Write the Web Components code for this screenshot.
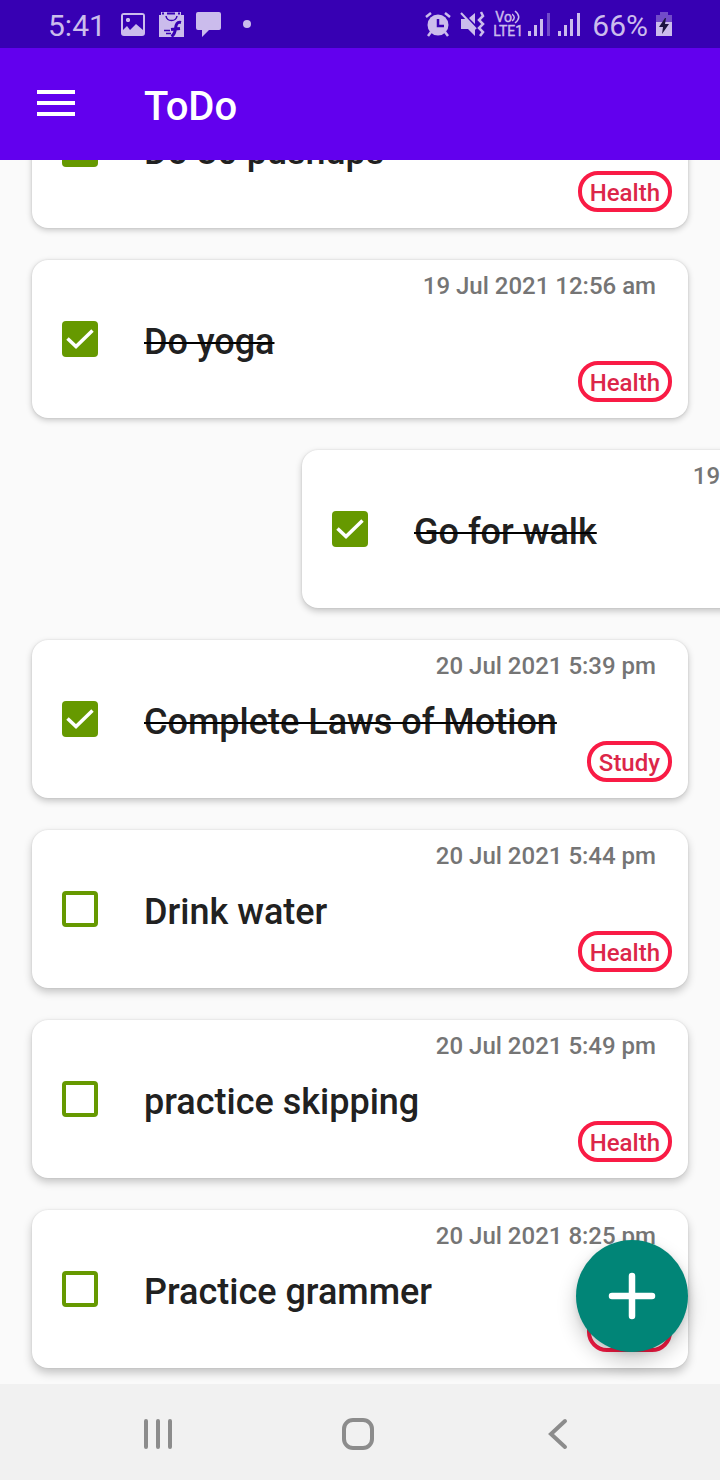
<!DOCTYPE html>
<html lang="en">
<head>
<meta charset="utf-8">
<meta name="viewport" content="width=device-width, initial-scale=1">
<title>ToDo</title>
<style>
  html, body { margin: 0; height: 100%; }
  body { font-family: Roboto, "Liberation Sans", sans-serif; background: #fafafa; color: #212121; }
</style>
</head>
<body>
<todo-app>
  <status-bar slot="top"></status-bar>
  <app-bar slot="top">ToDo</app-bar>
  <task-list>
    <task-card done tag="Health">Do 30 pushups</task-card>
    <task-card done date="19 Jul 2021 12:56 am" tag="Health">Do yoga</task-card>
    <task-card done swiped date="19 Jul 2021 12:56 am">Go for walk</task-card>
    <task-card done date="20 Jul 2021 5:39 pm" tag="Study">Complete Laws of Motion</task-card>
    <task-card date="20 Jul 2021 5:44 pm" tag="Health">Drink water</task-card>
    <task-card date="20 Jul 2021 5:49 pm" tag="Health">practice skipping</task-card>
    <task-card date="20 Jul 2021 8:25 pm" tag="Study">Practice grammer</task-card>
  </task-list>
  <add-button slot="floating"></add-button>
  <nav-bar slot="bottom"></nav-bar>
</todo-app>

<script>
class BaseElement extends HTMLElement {
  render(html) {
    const root = this.attachShadow({ mode: "open" });
    root.innerHTML = html;
    return root;
  }
}

customElements.define("todo-app", class extends BaseElement {
  connectedCallback() {
    this.render(`
      <style>
        :host { display: flex; flex-direction: column; height: 100vh; overflow: hidden; }
        main { position: relative; flex: 1; min-height: 0; display: flex; flex-direction: column; }
      </style>
      <slot name="top"></slot>
      <main><slot></slot><slot name="floating"></slot></main>
      <slot name="bottom"></slot>`);
  }
});

customElements.define("status-bar", class extends BaseElement {
  connectedCallback() {
    this.render(`
      <style>
        :host { display: flex; justify-content: space-between; align-items: center; height: 48px;
          padding: 0 48px; background: #3700b3; color: #cbbcec; font-size: 30px; line-height: 36px; }
        div { display: flex; align-items: center; }
        .left { gap: 12px; }
        .right { gap: 8px; }
        .time { margin: 4px 2px 0 0; }
        .percent { margin: 4px 0 0 4px; }
        svg { display: block; fill: currentColor; }
        .volte { display: grid; font-size: 14px; line-height: 14px; width: 30px; margin-right: -3px; -webkit-text-stroke: .4px; }
        .volte span:first-child { display: flex; padding-left: 2px; }
      </style>
      <div class="left">
        <span class="time">5:41</span>
        <svg width="26" height="26" viewBox="0 0 26 26"><path fill-rule="evenodd" d="M4 2h18a3 3 0 0 1 3 3v17a3 3 0 0 1-3 3H4a3 3 0 0 1-3-3V5a3 3 0 0 1 3-3zM3 4v15l4-4 3 4 6-6 7 6V4zm4 3h2l1 1v2l-1 1H7l-1-1V8z"/></svg>
        <svg width="26" height="26" viewBox="0 0 26 26"><path d="M3 1h20v3h3v22H1V4h2z"/><g fill="none" stroke="#3700b3"><path d="M4 2.500h2M20 2.500h2M9 2.500h8" stroke-width="2"/><path d="M8 5c1 6 10 6 11 0" stroke-width="1.500"/><path d="M23 11.500c-4-1-5 2-5.500 6s-1 6-4 8M13 18.500l9-1" stroke-width="3"/><path d="M6 19.500h6M8 22.500h5" stroke-width="1.500"/></g></svg>
        <svg width="25" height="26" viewBox="0 0 25 26"><path d="M2 1h21a2 2 0 0 1 2 2v14a2 2 0 0 1-2 2H13l-7 7v-7H2a2 2 0 0 1-2-2V3a2 2 0 0 1 2-2z"/></svg>
        <svg width="28" height="26" viewBox="0 0 28 26"><circle cx="14" cy="13" r="4"/></svg>
      </div>
      <div class="right">
        <svg width="26" height="26" viewBox="0 0 26 26"><circle cx="13" cy="14" r="10.500"/><path d="M1 6l5-4M25 6l-5-4M6 21l-3 4M20 21l3 4" stroke="currentColor" stroke-width="2.500"/><path d="M13 8v7h6" fill="none" stroke="#3700b3" stroke-width="2.500"/></svg>
        <svg width="26" height="26" viewBox="0 0 26 26"><path d="M2 8h5l9 9v8l-7-7H2zM10 7l6-5v11z"/><path d="M2 2l15 16" stroke="currentColor" stroke-width="2"/><path d="M22 1l2 4-4 4 4 4-4 4 4 4-3 4" fill="none" stroke="currentColor" stroke-width="2.500"/></svg>
        <span class="volte"><span>Vo<svg width="9" height="14" viewBox="0 0 9 14"><path d="M0 4c3 2 3 5 0 7M3 1c5 4 5 8 0 12" fill="none" stroke="currentColor" stroke-width="1.500"/></svg></span><span>LTE1</span></span>
        <svg width="22" height="26" viewBox="0 0 22 26"><path d="M0 20h3v5H0zM6 14h3v11H6zM12 8h3v17h-3z"/><path d="M19 2h3v23h-3z" opacity=".4"/></svg>
        <svg width="22" height="26" viewBox="0 0 22 26"><path d="M0 20h3v5H0zM6 14h3v11H6zM12 8h3v17h-3zM19 2h3v23h-3z"/></svg>
        <span class="percent">66%</span>
        <svg width="16" height="26" viewBox="0 0 16 26"><path d="M4 1h8v3h4v7H0V4h4z" opacity=".4"/><path d="M0 11h16v14H0z"/><path d="M9 7l-6 9h4l-1 7 7-10H9l1-6z" fill="#1d1440"/></svg>
      </div>`);
  }
});

customElements.define("app-bar", class extends BaseElement {
  connectedCallback() {
    this.render(`
      <style>
        :host { display: flex; align-items: center; gap: 56px; box-sizing: border-box; height: 112px;
          padding: 0 24px 2px; background: #6200ee; color: #fff; }
        button { width: 64px; height: 64px; padding: 0; border: 0; background: none; color: inherit; }
        svg { display: block; margin: auto; }
        h1 { margin: 8px 0 0; font-size: 40px; line-height: 48px; font-weight: 500; }
      </style>
      <button type="button" aria-label="Open menu">
        <svg width="38" height="26" viewBox="0 0 38 26"><path d="M0 0h38v4H0zM0 11h38v4H0zM0 22h38v4H0z" fill="currentColor"/></svg>
      </button>
      <h1><slot></slot></h1>`);
  }
});

customElements.define("task-list", class extends BaseElement {
  connectedCallback() {
    this.render(`
      <style>
        :host { display: flex; flex-direction: column; gap: 32px; flex: 1; min-height: 0; box-sizing: border-box;
          padding: 32px 32px 16px; overflow: hidden auto; scrollbar-width: none; }
        ::slotted(*) { flex: none; }
        /* cast shadows grow towards the bottom of the screen */
        ::slotted(:nth-child(n+3)) { --drop: 3px; --spread: 7px; }
        ::slotted(:nth-child(n+5)) { --drop: 4px; --spread: 8px; }
        ::slotted(:nth-child(n+7)) { --drop: 5px; --spread: 10px; }
      </style>
      <slot></slot>`);
    addEventListener("DOMContentLoaded", () => { this.scrollTop = this.scrollHeight; });
  }
});

customElements.define("task-card", class extends BaseElement {
  connectedCallback() {
    const root = this.render(`
      <style>
        :host { display: grid; grid-template: 61px 40px 41px / 82px 1fr; padding: 0 16px 16px 30px;
          border-radius: 16px; background: #fff;
          box-shadow: 0 var(--drop, 2px) var(--spread, 6px) rgba(0, 0, 0, .22), 0 0 2px rgba(0, 0, 0, .12); }
        :host([swiped]) { transform: translateX(270px); }
        time { grid-area: 1 / 1 / 2 / 3; justify-self: end; padding: 12px 16px 0 0;
          font-size: 24px; line-height: 28px; font-weight: 500; color: #757575; white-space: nowrap; }
        input { grid-area: 2 / 1; appearance: none; box-sizing: border-box; width: 36px; height: 36px;
          margin: 0; border: 4px solid #669900; border-radius: 4px; }
        input:checked { background: #669900 border-box url("data:image/svg+xml,%3Csvg xmlns='http://www.w3.org/2000/svg' width='36' height='36'%3E%3Cpath d='M5.500 17.500L14 25.500L30.500 9.500' fill='none' stroke='white' stroke-width='3.500'/%3E%3C/svg%3E"); }
        input:checked { border-color: transparent; }
        label { grid-area: 2 / 2; padding-top: 2px; align-self: center; font-size: 36px; line-height: 40px; font-weight: 500; }
        :host([done]) label { text-decoration: line-through 2px #000; }
        .tag { grid-area: 3 / 2; justify-self: end; box-sizing: border-box; height: 41px; padding: 0 8px;
          border: 4px solid #f91b45; border-radius: 20px; font-size: 24px; line-height: 36px;
          font-weight: 500; color: #dc2649; }
      </style>
      <time></time>
      <input type="checkbox" id="done">
      <label for="done"><slot></slot></label>`);
    root.querySelector("time").textContent = this.getAttribute("date") || "";
    root.querySelector("input").checked = this.hasAttribute("done");
    root.querySelector("input").addEventListener("change", e => this.toggleAttribute("done", e.target.checked));
    if (this.hasAttribute("tag")) {
      const tag = document.createElement("span");
      tag.className = "tag";
      tag.textContent = this.getAttribute("tag");
      root.append(tag);
    }
  }
});

customElements.define("add-button", class extends BaseElement {
  connectedCallback() {
    this.render(`
      <style>
        :host { position: absolute; right: 32px; bottom: 32px; display: block; }
        button { display: grid; place-items: center; width: 112px; height: 112px; padding: 0; border: 0;
          border-radius: 50%; background: #018577; color: #fff;
          box-shadow: 0 10px 20px rgba(0, 0, 0, .2), 0 2px 6px rgba(0, 0, 0, .1); }
      </style>
      <button type="button" aria-label="Add task">
        <svg width="48" height="48" viewBox="0 0 48 48"><path d="M24 4v40M4 24h40" stroke="currentColor" stroke-width="6.500" stroke-linecap="round"/></svg>
      </button>`);
  }
});

customElements.define("nav-bar", class extends BaseElement {
  connectedCallback() {
    this.render(`
      <style>
        :host { display: flex; justify-content: center; height: 96px; padding: 4px 4px 0 0; box-sizing: border-box;
          background: #f1f1f1; color: #8c8c8c; }
        nav { display: flex; width: 84%; }
        button { flex: 1; padding: 0; border: 0; background: none; color: inherit; }
        svg { display: block; margin: auto; fill: none; stroke: currentColor; stroke-width: 4; }
      </style>
      <nav aria-label="System">
        <button type="button" aria-label="Recents"><svg width="32" height="32" viewBox="0 0 32 32" stroke-linecap="round"><path d="M4 3v26M16 3v26M28 3v26"/></svg></button>
        <button type="button" aria-label="Home"><svg width="32" height="32" viewBox="0 0 32 32"><rect x="2" y="2" width="28" height="28" rx="9"/></svg></button>
        <button type="button" aria-label="Back"><svg width="32" height="32" viewBox="0 0 32 32" stroke-linecap="round"><path d="M23 3L9 16l14 13"/></svg></button>
      </nav>`);
  }
});
</script>
</body>
</html>
